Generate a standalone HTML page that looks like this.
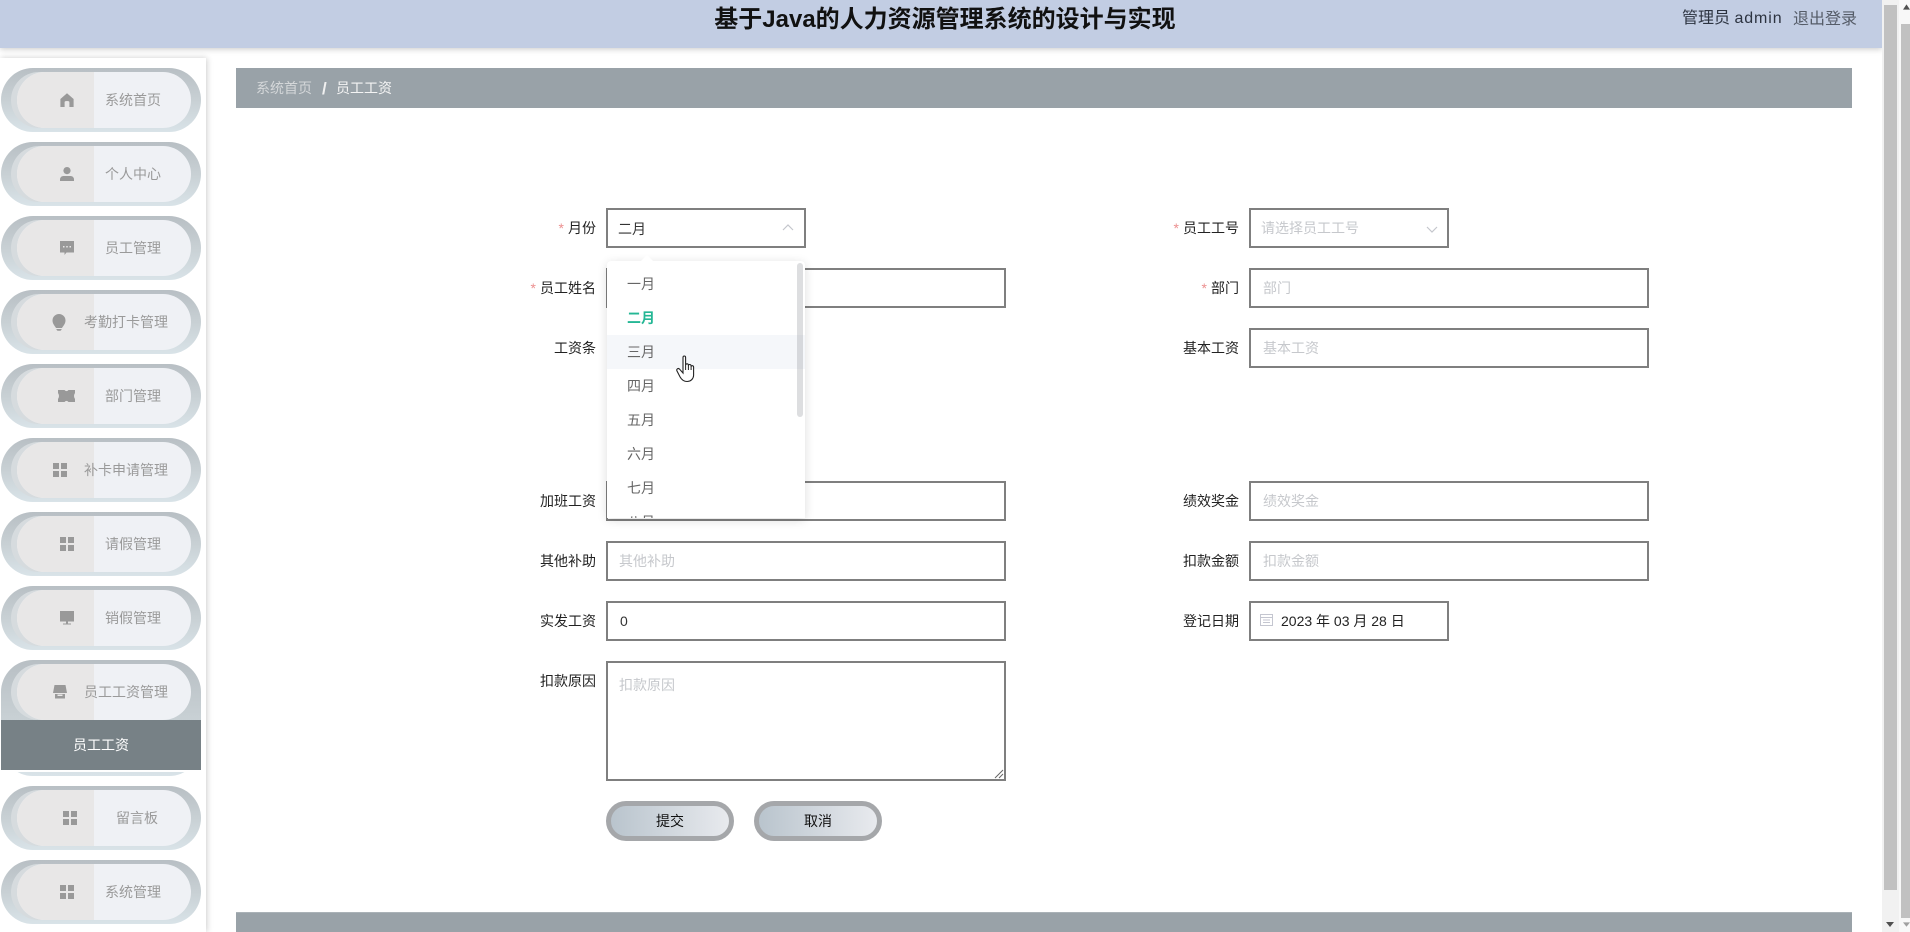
<!DOCTYPE html>
<html lang="zh">
<head>
<meta charset="utf-8">
<title>基于Java的人力资源管理系统的设计与实现</title>
<style>
html,body{margin:0;padding:0;width:1910px;height:932px;overflow:hidden;background:#fff}
body{position:relative;font-family:"Liberation Sans","Noto Sans CJK SC",sans-serif;font-size:14px;color:#333}
div,span,svg{position:absolute;box-sizing:border-box}
.hdr{left:0;top:0;width:1882px;height:48px;background:#c2cde3;box-shadow:0 1px 6px rgba(0,0,0,.22)}
.title{left:0;width:1890px;top:1px;height:38px;line-height:38px;text-align:center;font-size:24px;font-weight:bold;color:#111}
.side{left:0;top:58px;width:206px;height:874px;background:#fff;box-shadow:1px 0 6px rgba(0,0,0,.2)}
.pill{left:1px;width:200px;height:64px;border-radius:32px;overflow:hidden;background:linear-gradient(180deg,#b8bfc4 0,#c8d0d4 50%,#d9e3e8 100%)}
.cres{left:10px;top:4px;width:60px;height:56px;border-radius:28px 0 0 28px;background:#d6dbde}
.inner{left:16px;top:4px;width:174px;height:56px;border-radius:28px;overflow:hidden;background:#eff1f5}
.inner i{position:absolute;left:0;top:0;width:77px;height:56px;background:#e8e7e7;display:block}
.t{top:0;height:64px;line-height:64px;color:#9a9a9a;font-size:14px;white-space:nowrap}
.ic{top:25px;width:14px;height:14px;fill:#999}
.crumb{left:236px;top:68px;width:1616px;height:40px;background:#99a2a8}
.crumb span{top:0;line-height:41px;font-size:14px;white-space:nowrap}
.lb{width:160px;text-align:right;height:40px;line-height:38px;color:#222;font-size:14px;white-space:nowrap}
.lb b{font-weight:normal;color:#ec8f8f;margin-right:4px;font-family:"Liberation Sans",sans-serif}
.in{height:40px;background:#fff;border:2px solid #7f7f7f;line-height:37px;padding-left:11px;font-size:14px;color:#c6c8cc;white-space:nowrap}
.w{left:606px;width:400px}.r{left:1249px;width:400px;padding-left:12px}
.dd{left:607px;top:261px;width:198px;height:257px;background:#fff;border-radius:4px 4px 0 0;box-shadow:0 2px 10px rgba(0,0,0,.14);overflow:hidden}
.dd span{left:20px;line-height:34px;height:34px;color:#666;font-size:14px;white-space:nowrap}
.btn{top:801px;width:128px;height:40px;border-radius:20px;border:5px solid #a5a7aa;background:linear-gradient(90deg,#b9c4cd,#e8eaee);text-align:center;line-height:31px;color:#111;font-size:14px}
.sb{top:0;height:932px;background:#f1f1f1}
.th{background:#c1c1c1}
</style>
</head>
<body>

<div class="hdr"></div>
<div class="title">基于Java的人力资源管理系统的设计与实现</div>
<span style="left:1682px;top:7px;font-size:16px;line-height:24px;color:#2c3340;white-space:nowrap">管理员 <span style="position:static;letter-spacing:.9px">admin</span></span>
<span style="left:1793px;top:8px;font-size:16px;line-height:24px;color:#555c68;white-space:nowrap">退出登录</span>

<div class="side"></div>

<div class="pill" style="top:68px"><div class="cres"></div><div class="inner"><i></i></div>
<svg class="ic" style="left:59px" viewBox="0 0 14 14"><path d="M7 0.3 13.6 6v8H9.4V9.2Q9.4 8 7 8T4.6 9.2V14H.4V6z"/></svg>
<span class="t" style="left:104px">系统首页</span></div>

<div class="pill" style="top:142px"><div class="cres"></div><div class="inner"><i></i></div>
<svg class="ic" style="left:59px" viewBox="0 0 14 14"><circle cx="7" cy="3.600" r="3.600"/><path d="M0 14v-1.600C0 10.400 1.600 9 3.500 9h7c1.900 0 3.500 1.400 3.500 3.400V14z"/></svg>
<span class="t" style="left:104px">个人中心</span></div>

<div class="pill" style="top:216px"><div class="cres"></div><div class="inner"><i></i></div>
<svg class="ic" style="left:59px" viewBox="0 0 14 14"><path fill-rule="evenodd" d="M0 0h14v11.500H6.500L4.500 14V11.500H0zM3 5v1.500h1.500V5zM6.250 5v1.500h1.500V5zM9.500 5v1.500H11V5z"/></svg>
<span class="t" style="left:104px">员工管理</span></div>

<div class="pill" style="top:290px"><div class="cres"></div><div class="inner"><i></i></div>
<svg class="ic" style="left:51px;top:24px;width:14px;height:17px" viewBox="0 0 14 17"><path d="M7 0a6.500 6.500 0 0 1 6.500 6.500c0 3.200-2.200 5.300-3.500 7.500H4C2.700 11.800.5 9.700.5 6.500A6.500 6.500 0 0 1 7 0z"/><path d="M4.500 15h5v.8l-1 1h-3l-1-1z"/></svg>
<span class="t" style="left:83px">考勤打卡管理</span></div>

<div class="pill" style="top:364px"><div class="cres"></div><div class="inner"><i></i></div>
<svg class="ic" style="left:57px;top:26px;width:17px;height:12px" viewBox="0 0 17 12"><path d="M0 0h6.500q2 2.200 4 0H17v3q-2 3 0 6v3h-6.500q-2-2.200-4 0H0V9q2-3 0-6z"/></svg>
<span class="t" style="left:104px">部门管理</span></div>

<div class="pill" style="top:438px"><div class="cres"></div><div class="inner"><i></i></div>
<svg class="ic" style="left:52px" viewBox="0 0 14 14"><path d="M0 0h6v6H0zM8 0h6v6H8zM0 8h6v6H0zM8 8h6v6H8z"/></svg>
<span class="t" style="left:83px">补卡申请管理</span></div>

<div class="pill" style="top:512px"><div class="cres"></div><div class="inner"><i></i></div>
<svg class="ic" style="left:59px" viewBox="0 0 14 14"><path d="M0 0h6v6H0zM8 0h6v6H8zM0 8h6v6H0zM8 8h6v6H8z"/></svg>
<span class="t" style="left:104px">请假管理</span></div>

<div class="pill" style="top:586px"><div class="cres"></div><div class="inner"><i></i></div>
<svg class="ic" style="left:59px" viewBox="0 0 14 14"><path d="M0 0h14v10.500H0zM6 10.500h2V12.500h3V13.500H3V12.500h3z"/></svg>
<span class="t" style="left:104px">销假管理</span></div>

<div class="pill" style="top:660px;height:116px"><div class="cres"></div><div class="inner"><i></i></div>
<svg class="ic" style="left:52px" viewBox="0 0 14 14"><path d="M1.500 0h11L14 8H0zM2 9h10v4.500H2z"/><path fill="#e8e7e7" d="M4.500 9.500h5v1.500h-5z"/></svg>
<span class="t" style="left:83px">员工工资管理</span>
</div>
<div style="left:1px;top:770px;width:200px;height:2px;background:#fff"></div>
<div style="left:1px;top:720px;width:200px;height:50px;background:#778186;color:#fff;text-align:center;line-height:51px;font-size:14px">员工工资</div>

<div class="pill" style="top:786px"><div class="cres"></div><div class="inner"><i></i></div>
<svg class="ic" style="left:62px" viewBox="0 0 14 14"><path d="M0 0h6v6H0zM8 0h6v6H8zM0 8h6v6H0zM8 8h6v6H8z"/></svg>
<span class="t" style="left:115px">留言板</span></div>

<div class="pill" style="top:860px"><div class="cres"></div><div class="inner"><i></i></div>
<svg class="ic" style="left:59px" viewBox="0 0 14 14"><path d="M0 0h6v6H0zM8 0h6v6H8zM0 8h6v6H0zM8 8h6v6H8z"/></svg>
<span class="t" style="left:104px">系统管理</span></div>

<div class="crumb">
<span style="left:20px;color:#d4d7d9">系统首页</span>
<span style="left:86px;color:#f0f0f0;font-weight:bold;font-size:17px">/</span>
<span style="left:100px;color:#f4f4f4">员工工资</span>
</div>

<!-- left labels -->
<div class="lb" style="left:436px;top:209px"><b>*</b>月份</div>
<div class="lb" style="left:436px;top:269px"><b>*</b>员工姓名</div>
<div class="lb" style="left:436px;top:329px">工资条</div>
<div class="lb" style="left:436px;top:482px">加班工资</div>
<div class="lb" style="left:436px;top:542px">其他补助</div>
<div class="lb" style="left:436px;top:602px">实发工资</div>
<div class="lb" style="left:436px;top:662px">扣款原因</div>

<!-- right labels -->
<div class="lb" style="left:1079px;top:209px"><b>*</b>员工工号</div>
<div class="lb" style="left:1079px;top:269px"><b>*</b>部门</div>
<div class="lb" style="left:1079px;top:329px">基本工资</div>
<div class="lb" style="left:1079px;top:482px">绩效奖金</div>
<div class="lb" style="left:1079px;top:542px">扣款金额</div>
<div class="lb" style="left:1079px;top:602px">登记日期</div>

<!-- left fields -->
<div class="in" style="left:606px;top:208px;width:200px;color:#333;padding-left:10px;line-height:38px">二月</div>
<svg style="left:782px;top:224px;width:12px;height:7px" viewBox="0 0 12 7"><path d="M1 6 6 1l5 5" fill="none" stroke="#c4c6cc" stroke-width="1.200"/></svg>
<div class="in w" style="top:268px"></div>
<div class="in w" style="top:481px"></div>
<div class="in w" style="top:541px">其他补助</div>
<div class="in w" style="top:601px;color:#333;padding-left:12px">0</div>
<div class="in w" style="top:661px;height:120px;line-height:20px;padding-top:12px">扣款原因
<svg style="right:0;bottom:0;width:10px;height:10px" viewBox="0 0 10 10"><path d="M1 9 9 1M5 9 9 5" stroke="#666" stroke-width="1" fill="none"/></svg>
</div>

<!-- right fields -->
<div class="in" style="left:1249px;top:208px;width:200px;padding-left:10px">请选择员工工号</div>
<svg style="left:1426px;top:226px;width:12px;height:7px" viewBox="0 0 12 7"><path d="M1 1l5 5 5-5" fill="none" stroke="#c4c6cc" stroke-width="1.200"/></svg>
<div class="in r" style="top:268px">部门</div>
<div class="in r" style="top:328px">基本工资</div>
<div class="in r" style="top:481px">绩效奖金</div>
<div class="in r" style="top:541px">扣款金额</div>
<div class="in" style="left:1249px;top:601px;width:200px;color:#222;padding-left:30px">2023 年 03 月 28 日</div>
<svg style="left:1260px;top:613px;width:13px;height:13px" viewBox="0 0 13 13"><path d="M.5 1.500h12v11H.5zM.5 4.500h12M3 7h7M3 9.500h7" fill="none" stroke="#c4c6d0" stroke-width="1"/></svg>

<!-- buttons -->
<div class="btn" style="left:606px">提交</div>
<div class="btn" style="left:754px">取消</div>

<!-- dropdown -->
<svg style="left:640px;top:255px;width:14px;height:7px;z-index:3" viewBox="0 0 14 7"><path d="M0 7 7 0l7 7z" fill="#fff"/></svg>
<div class="dd">
<div style="left:0;top:74px;width:198px;height:34px;background:#f5f7fa"></div>
<span style="top:6px">一月</span>
<span style="top:40px;color:#25b795;font-weight:bold">二月</span>
<span style="top:74px">三月</span>
<span style="top:108px">四月</span>
<span style="top:142px">五月</span>
<span style="top:176px">六月</span>
<span style="top:210px">七月</span>
<span style="top:244px">八月</span>
<div style="left:190px;top:2px;width:6px;height:154px;border-radius:3px;background:rgba(144,147,153,.3)"></div>
</div>

<!-- cursor -->
<svg style="left:675px;top:355px;width:22px;height:28px;z-index:5" viewBox="0 0 22 28"><path d="M8 2.500c0-2 2.600-2 2.600 0V10c.3-1.600 2.600-1.600 2.800 0v.6c.3-1.500 2.500-1.500 2.700.2v.7c.4-1.300 2.400-1.100 2.500.5V20c0 3.500-2.600 6.500-6.500 6.500-3.500 0-5.300-1.500-7-4.500L2 16c-1-2 1.300-3.300 2.600-1.800L8 18z" fill="#fff" stroke="#222" stroke-width="1.100"/><path d="M10.600 10v5M13.400 10.500v4.500M16.100 11v4" stroke="#222" stroke-width="1" fill="none"/></svg>

<!-- footer bar -->
<div style="left:236px;top:912px;width:1616px;height:20px;background:#99a2a8;border-top:1px solid #aab2b7"></div>

<!-- scrollbars -->
<div class="sb" style="left:1882px;width:17px"></div>
<div class="th" style="left:1884px;top:5px;width:13px;height:885px"></div>
<svg style="left:1886px;top:922px;width:8px;height:6px" viewBox="0 0 8 6"><path d="M0 0h8L4 5z" fill="#505050"/></svg>
<div class="sb" style="left:1899px;width:11px;background:#f8f8f8"></div>
<div class="th" style="left:1901px;top:24px;width:9px;height:894px"></div>
<svg style="left:1903px;top:4px;width:7px;height:6px" viewBox="0 0 8 6"><path d="M0 6h8L4 0z" fill="#505050"/></svg>
<svg style="left:1903px;top:922px;width:7px;height:6px" viewBox="0 0 8 6"><path d="M0 0h8L4 5z" fill="#a0a0a0"/></svg>

</body>
</html>
